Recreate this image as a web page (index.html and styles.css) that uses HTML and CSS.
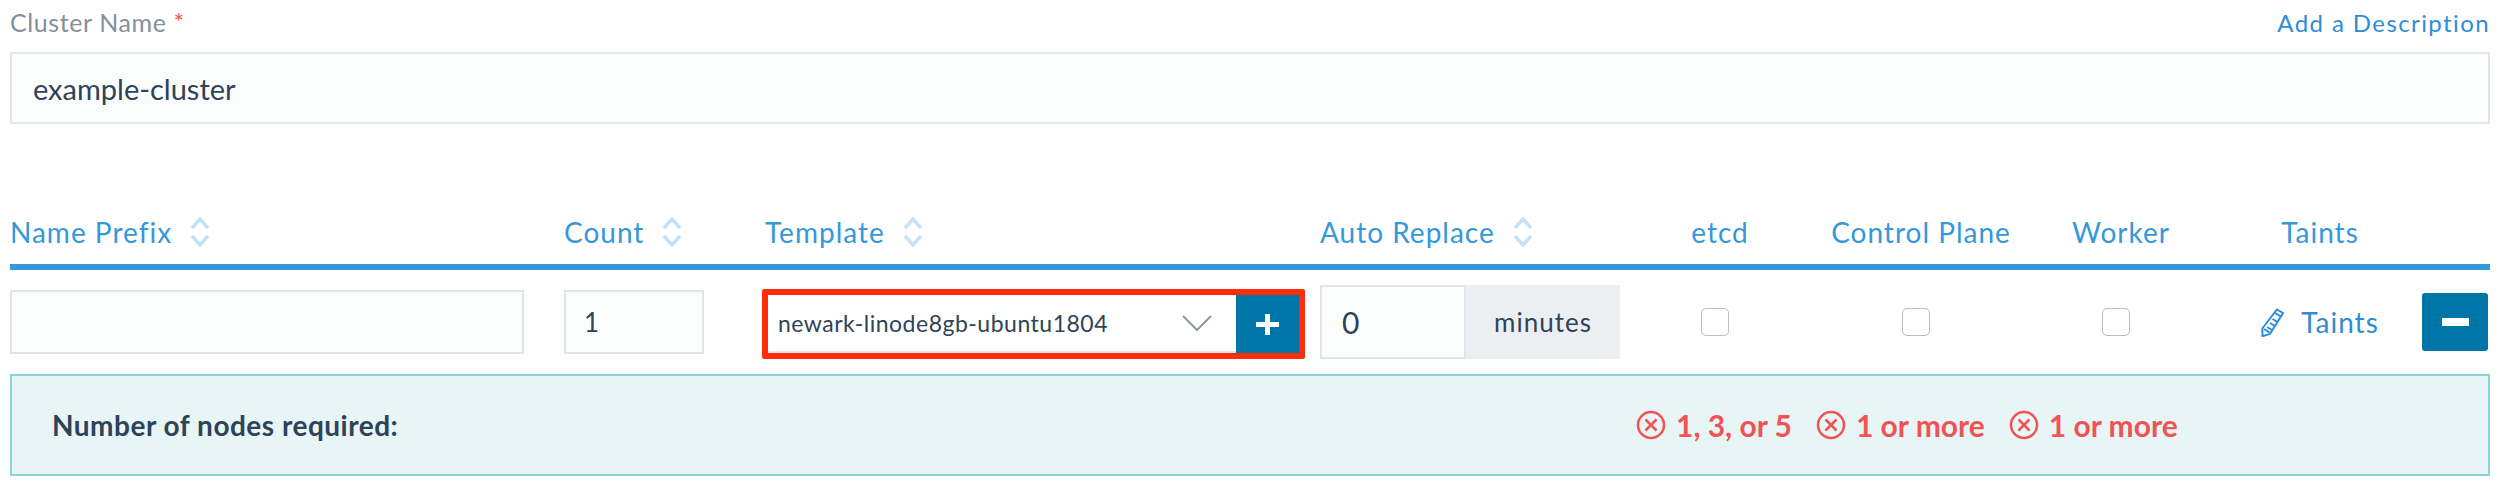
FILE: index.html
```html
<!DOCTYPE html>
<html>
<head>
    <title>Add Cluster</title>
    <link rel="stylesheet" href="styles.css">
</head>
<body>
    <!-- cluster name -->
    <div class="name-head">
        <span class="field-label">Cluster Name <span class="required">*</span></span>
        <a class="add-desc">Add a Description</a>
    </div>
    <input class="text-input cluster-input" type="text" value="example-cluster">

    <!-- node pools -->
    <div class="pool-grid pool-head">
        <div class="th"><span>Name Prefix</span>
            <svg class="sort" viewBox="0 0 20 30"><path d="M2 11 10 2l8 9M2 19l8 9 8-9"/></svg>
        </div>
        <div class="th"><span>Count</span>
            <svg class="sort" viewBox="0 0 20 30"><path d="M2 11 10 2l8 9M2 19l8 9 8-9"/></svg>
        </div>
        <div class="th th-template"><span>Template</span>
            <svg class="sort" viewBox="0 0 20 30"><path d="M2 11 10 2l8 9M2 19l8 9 8-9"/></svg>
        </div>
        <div class="th"><span>Auto Replace</span>
            <svg class="sort" viewBox="0 0 20 30"><path d="M2 11 10 2l8 9M2 19l8 9 8-9"/></svg>
        </div>
        <div class="th th-center">etcd</div>
        <div class="th th-center">Control Plane</div>
        <div class="th th-center">Worker</div>
        <div class="th th-center th-taints">Taints</div>
    </div>

    <div class="pool-grid pool-row">
        <input class="text-input prefix-input" type="text">
        <input class="text-input count-input" type="text" value="1">
        <div class="template-box">
            <div class="template-select">
                <span>newark-linode8gb-ubuntu1804</span>
                <svg class="chevron" viewBox="0 0 30 16"><path d="M1 1l14 14L29 1"/></svg>
            </div>
            <button class="btn-blue btn-add">
                <svg viewBox="0 0 23 21"><path d="M9 0h5v8h9v5h-9v8H9v-8H0V8h9z"/></svg>
            </button>
        </div>
        <div class="replace-group">
            <input class="text-input replace-input" type="text" value="0">
            <span class="addon">minutes</span>
        </div>
        <div class="cell-center"><span class="check"></span></div>
        <div class="cell-center"><span class="check"></span></div>
        <div class="cell-center"><span class="check"></span></div>
        <div class="cell-center cell-taints">
            <a class="taints-link">
                <svg class="pencil" viewBox="0 0 24 30">
                    <path d="M16 2.5l6 3.5-13 21-7.500 2.200-.2-7.700z"/>
                    <path d="M14 6l6 3.500M3 22l5.500 3.300M6 20l5 3M9 16l5 3M11.500 12l5 3"/>
                </svg>
                Taints
            </a>
        </div>
        <button class="btn-blue btn-remove"><span class="minus-bar"></span></button>
    </div>

    <!-- requirements -->
    <div class="nodes-banner">
        <b class="banner-label">Number of nodes required:</b>
        <div class="errors">
            <span class="err">
                <svg viewBox="0 0 30 30"><circle cx="15" cy="15" r="13"/><path d="M9.500 9.500l11 11M20.500 9.500l-11 11"/></svg>
                1, 3, or 5
            </span>
            <span class="err">
                <svg viewBox="0 0 30 30"><circle cx="15" cy="15" r="13"/><path d="M9.500 9.500l11 11M20.500 9.500l-11 11"/></svg>
                1 or more
            </span>
            <span class="err">
                <svg viewBox="0 0 30 30"><circle cx="15" cy="15" r="13"/><path d="M9.500 9.500l11 11M20.500 9.500l-11 11"/></svg>
                1 or more
            </span>
        </div>
    </div>
</body>
</html>
```

FILE: styles.css
```css
* {
    box-sizing: border-box;
}
body {
    margin: 0;
    padding: 0 10px;
    background: #fff;
    font-family: "Lato", "Liberation Sans", sans-serif;
    color: #2f4358;
    overflow: hidden;
}

/* cluster name */
.name-head {
    display: flex;
    justify-content: space-between;
    align-items: center;
    height: 52px;
    padding-bottom: 8px;
}
.field-label {
    font-size: 25px;
    color: #84909a;
    letter-spacing: 0.6px;
}
.required {
    color: #f15354;
}
.add-desc {
    font-size: 24px;
    color: #2f8dd6;
    letter-spacing: 1.4px;
}
.text-input {
    display: block;
    border: 2px solid #e0e6e8;
    background: #fbfcfc;
    font: inherit;
    color: inherit;
    outline: none;
    border-radius: 0;
}
.cluster-input {
    width: 100%;
    height: 72px;
    padding: 0 21px;
    font-size: 29px;
}

/* node pool table */
.pool-grid {
    display: grid;
    grid-template-columns: 554px 198px 558px 320px 150px 252px 148px 232px 68px;
}
.pool-head {
    margin-top: 80px;
    height: 66px;
    border-bottom: 6px solid #3498db;
    color: #3498db;
    font-size: 28px;
    align-items: center;
    padding-bottom: 4px;
}
.th {
    display: flex;
    align-items: center;
    gap: 18px;
    letter-spacing: 1px;
}
.th-template {
    padding-left: 3px;
}
.th-center {
    justify-content: center;
    padding-left: 10px;
}
.th-taints {
    padding-left: 28px;
}
.sort {
    width: 20px;
    height: 30px;
    fill: none;
    stroke: #c5e1f5;
    stroke-width: 3.500;
}

.pool-row {
    height: 104px;
    align-items: center;
}
.prefix-input {
    width: 514px;
    height: 64px;
}
.count-input {
    width: 140px;
    height: 64px;
    padding: 0 18px;
    font-size: 26px;
}

/* red annotation round the template picker */
.template-box {
    display: flex;
    width: 543px;
    height: 70px;
    margin-top: 4px;
    border: 6px solid #ff2d0a;
    border-radius: 2px;
}
.template-select {
    flex: 1;
    display: flex;
    align-items: center;
    justify-content: space-between;
    padding: 0 24px 0 10px;
    border-bottom: 2px solid #e0e6e8;
    font-size: 23px;
    letter-spacing: 0.5px;
}
.chevron {
    width: 30px;
    height: 16px;
    fill: none;
    stroke: #8f989f;
    stroke-width: 2;
}
.btn-blue {
    display: flex;
    align-items: center;
    justify-content: center;
    border: 0;
    padding: 0;
    background: #0075a8;
}
.btn-add {
    width: 63px;
}
.btn-add svg {
    width: 23px;
    height: 21px;
    fill: #fff;
}

.replace-group {
    display: flex;
    height: 74px;
}
.replace-input {
    width: 146px;
    height: 74px;
    padding: 0 20px;
    font-size: 30px;
}
.addon {
    display: flex;
    align-items: center;
    justify-content: center;
    width: 154px;
    background: #ebeff1;
    font-size: 26px;
    letter-spacing: 1px;
}

.cell-center {
    display: flex;
    justify-content: center;
}
.cell-taints {
    padding-left: 28px;
}
.check {
    width: 28px;
    height: 28px;
    border: 1px solid #b9bfc3;
    border-radius: 5px;
    background: #fff;
}
.taints-link {
    display: flex;
    align-items: center;
    gap: 16px;
    color: #2f8dd6;
    font-size: 28px;
    letter-spacing: 1px;
}
.pencil {
    width: 24px;
    height: 30px;
    fill: none;
    stroke: #2f8dd6;
    stroke-width: 2;
}
.btn-remove {
    width: 66px;
    height: 58px;
    border-radius: 3px;
}
.minus-bar {
    width: 27px;
    height: 8px;
    background: #fff;
}

/* requirements banner */
.nodes-banner {
    display: flex;
    align-items: center;
    height: 102px;
    border: 2px solid #8ad4d4;
    background: #e7f5f6;
    padding-left: 40px;
}
.banner-label {
    width: 1584px;
    font-size: 28px;
    font-weight: 700;
    letter-spacing: 0.5px;
}
.errors {
    display: flex;
    gap: 24px;
}
.err {
    display: flex;
    align-items: center;
    gap: 10px;
    font-size: 30px;
    font-weight: 700;
    color: #f15354;
}
.err svg {
    width: 30px;
    height: 30px;
    fill: none;
    stroke: #f15354;
    stroke-width: 2.500;
}
```
